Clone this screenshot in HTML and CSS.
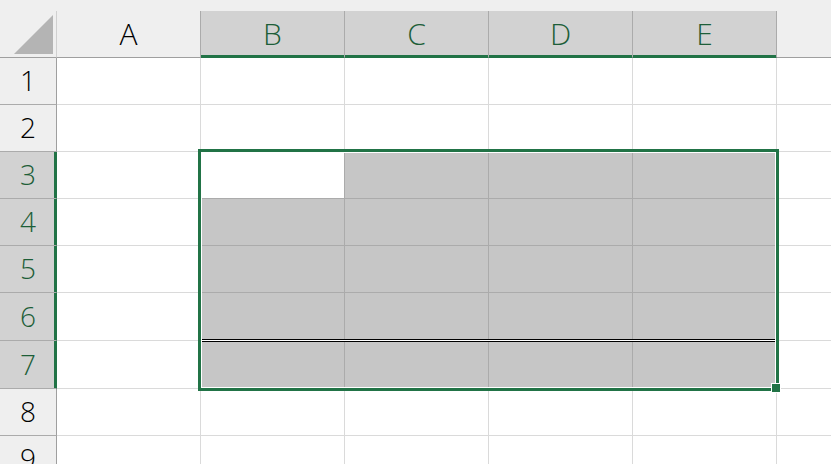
FILE: index.html
```html
<!DOCTYPE html>
<html lang="ja">
<head>
    <meta charset="UTF-8">
    <title>Sheet1</title>
    <link rel="stylesheet" href="styles.css">
</head>
<body>
<div class="sheet">
    <div class="grid">
        <div class="corner"><div class="tri"></div></div>
        <div class="colhead">A</div>
        <div class="colhead sel">B</div>
        <div class="colhead sel">C</div>
        <div class="colhead sel">D</div>
        <div class="colhead sel">E</div>
        <div class="colhead last"></div>

        <div class="rowhead">1</div>
        <div class="cell"></div><div class="cell"></div><div class="cell"></div><div class="cell"></div><div class="cell"></div><div class="cell last"></div>

        <div class="rowhead">2</div>
        <div class="cell"></div><div class="cell"></div><div class="cell"></div><div class="cell"></div><div class="cell"></div><div class="cell last"></div>

        <div class="rowhead sel">3</div>
        <div class="cell"></div><div class="cell active"></div><div class="cell in"></div><div class="cell in"></div><div class="cell in"></div><div class="cell last"></div>

        <div class="rowhead sel">4</div>
        <div class="cell"></div><div class="cell in"></div><div class="cell in"></div><div class="cell in"></div><div class="cell in"></div><div class="cell last"></div>

        <div class="rowhead sel">5</div>
        <div class="cell"></div><div class="cell in"></div><div class="cell in"></div><div class="cell in"></div><div class="cell in"></div><div class="cell last"></div>

        <div class="rowhead sel">6</div>
        <div class="cell"></div><div class="cell in"></div><div class="cell in"></div><div class="cell in"></div><div class="cell in"></div><div class="cell last"></div>

        <div class="rowhead sel">7</div>
        <div class="cell"></div><div class="cell in"></div><div class="cell in"></div><div class="cell in"></div><div class="cell in"></div><div class="cell last"></div>

        <div class="rowhead">8</div>
        <div class="cell"></div><div class="cell"></div><div class="cell"></div><div class="cell"></div><div class="cell"></div><div class="cell last"></div>

        <div class="rowhead">9</div>
        <div class="cell"></div><div class="cell"></div><div class="cell"></div><div class="cell"></div><div class="cell"></div><div class="cell last"></div>
    </div>

    <!-- 選択範囲 B3:E7 -->
    <div class="selection">
        <div class="dbl"></div>
        <div class="handle"></div>
    </div>
</div>
</body>
</html>
```

FILE: styles.css
```css
*{
    margin: 0;
    padding: 0;
    box-sizing: border-box;
}
html, body{
    width: 831px;
    height: 464px;
    overflow: hidden;
    background: #ffffff;
}
.sheet{
    position: relative;
    width: 831px;
    height: 464px;
    font-family: "Open Sans", "Noto Sans CJK JP", sans-serif;
    font-weight: 300;
}
.grid{
    display: grid;
    grid-template-columns: 57px repeat(5, 144px) 1fr;
    grid-template-rows: 58px 47px 47px 47px 47px 47px 48px 48px 47px 47px;
    background: #efefef;
}
.corner{
    position: relative;
    border-right: 1px solid #d0d0d0;
    border-bottom: 1px solid #9f9f9f;
    margin-top: 11px;
}
.tri{
    position: absolute;
    left: 14px;
    top: 4px;
    width: 39px;
    height: 39px;
    background: #b4b4b4;
    clip-path: polygon(100% 0, 100% 100%, 0 100%);
}
.colhead{
    display: flex;
    align-items: center;
    justify-content: center;
    margin-top: 11px;
    padding-bottom: 2px;
    border-right: 1px solid #ababab;
    border-bottom: 1px solid #9f9f9f;
    font-size: 30px;
    color: #000000;
}
.colhead.last{
    border-right: none;
}
.colhead.sel{
    background: #d2d2d2;
    color: #1d5e38;
    border-bottom-color: #217346;
    box-shadow: inset 0 -2px 0 #217346;
}
.rowhead{
    display: flex;
    align-items: center;
    justify-content: center;
    padding-bottom: 2px;
    border-right: 1px solid #9f9f9f;
    border-bottom: 1px solid #ababab;
    font-size: 28px;
    color: #000000;
}
.rowhead.sel{
    background: #d2d2d2;
    color: #1d5e38;
    border-right-color: #217346;
    box-shadow: inset -2px 0 0 #217346;
}
.cell{
    background: #ffffff;
    border-right: 1px solid #dadada;
    border-bottom: 1px solid #dadada;
}
.cell.last{
    border-right: none;
}
.cell.in{
    background: #c6c6c6;
    border-color: #ababab;
}
.cell.active{
    border-color: #ababab;
}
.selection{
    position: absolute;
    left: 198px;
    top: 149px;
    width: 581px;
    height: 242px;
    border: 3px solid #217346;
    box-shadow: inset 0 0 0 1px #ffffff;
}
.dbl{
    position: absolute;
    left: 1px;
    right: 1px;
    top: 187px;
    height: 3px;
    background: #ffffff;
    border-top: 1px solid #000000;
    border-bottom: 1px solid #000000;
}
.handle{
    position: absolute;
    left: 570px;
    top: 231px;
    width: 10px;
    height: 10px;
    background: #217346;
    border: 1px solid #ffffff;
}
```
